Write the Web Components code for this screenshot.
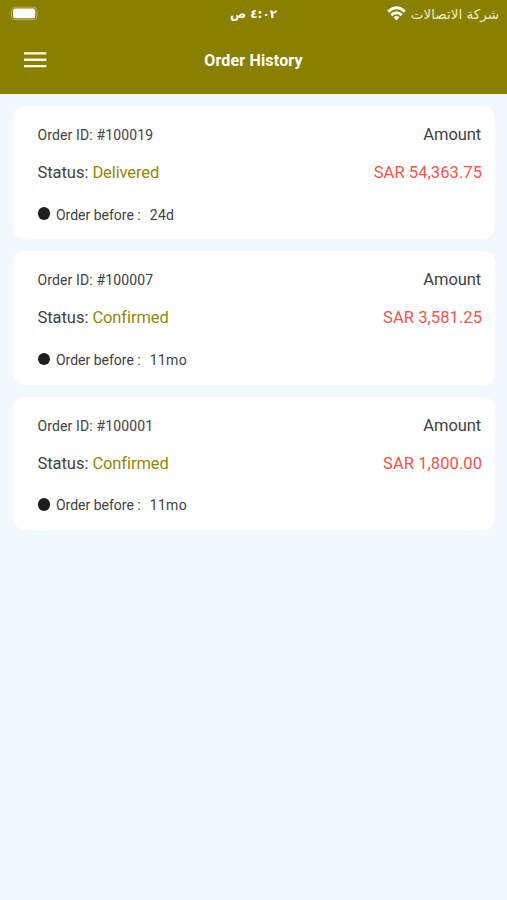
<!DOCTYPE html>
<html lang="en">
<head>
<meta charset="utf-8">
<title>Order History</title>
<style>
  html, body { margin: 0; height: 100%; }
  body { background: #f3f7fe; font-family: Roboto, "Noto Sans", sans-serif; color: #414143; overflow: hidden; }
</style>
</head>
<body>
<order-app>
  <status-bar slot="top"></status-bar>
  <app-bar slot="top">Order History</app-bar>
  <order-card order-id="#100019" status="Delivered" total="SAR 54,363.75" age="24d"></order-card>
  <order-card order-id="#100007" status="Confirmed" total="SAR 3,581.25" age="11mo"></order-card>
  <order-card order-id="#100001" status="Confirmed" total="SAR 1,800.00" age="11mo"></order-card>
</order-app>
<script>
class OrderApp extends HTMLElement {
  constructor() {
    super();
    this.attachShadow({ mode: "open" }).innerHTML = `
      <style>
        :host { display: flex; flex-direction: column; height: 100vh; }
        header { flex: none; height: 93.6px; background: #8a8000; color: #fff; }
        main { display: flex; flex-direction: column; gap: 12px; padding: 12.4px 12px 0 13px; }
      </style>
      <header><slot name="top"></slot></header>
      <main><slot></slot></main>`;
  }
}
class StatusBar extends HTMLElement {
  constructor() {
    super();
    this.attachShadow({ mode: "open" }).innerHTML = `
      <style>
        :host { display: grid; grid-template-columns: 1fr auto 1fr; align-items: center; height: 27px; padding: 0 8px; font: 13.5px/26px "DejaVu Sans", sans-serif; }
        .carrier { display: flex; justify-content: flex-end; align-items: center; gap: 5px; color: #efecc8; }
        .time { font-weight: bold; font-size: 12px; line-height: 26px; }
        svg { display: block; }
        .battery { margin-top: -1px; }
      </style>
      <svg class="battery" width="31" height="15" viewBox="0 0 31 15"><rect x="3.5" y="1.1" width="25.5" height="12.6" rx="3.6" fill="none" stroke="#b5ae5a"/><rect x="5" y="2.6" width="22.3" height="9.6" rx="2.2" fill="#fff"/><path d="M1.6 5.5Q.2 7.3 1.6 9.1z" fill="#b5ae5a"/></svg>
      <span class="time" dir="rtl">٤:٠٢ ص</span>
      <span class="carrier"><svg width="19" height="15" viewBox="0 0 19 15" fill="none" stroke="#fff" stroke-width="2.8"><path d="M1.2 5.6Q9.5-2 17.8 5.6M4.2 9.1Q9.5 4.3 14.8 9.1"/><path d="M6.5 11.2Q9.5 8.7 12.5 11.2L9.5 14.4z" fill="#fff" stroke="none"/></svg><span dir="rtl">شركة الاتصالات</span></span>`;
  }
}
class AppBar extends HTMLElement {
  constructor() {
    super();
    this.attachShadow({ mode: "open" }).innerHTML = `
      <style>
        :host { display: grid; grid-template-columns: 1fr auto 1fr; align-items: center; height: 66px; padding: 0 24px; font-weight: 700; font-size: 16px; letter-spacing: .17px; }
        svg { display: block; }
      </style>
      <svg width="23" height="16" viewBox="0 0 23 16" fill="#fffde8"><path d="M0 .3h22.3v2.3H0zM0 6.6h22.3v2.3H0zM0 12.9h22.3v2.3H0z"/></svg>
      <span><slot></slot></span><i></i>`;
  }
}
class OrderCard extends HTMLElement {
  connectedCallback() {
    const a = n => this.getAttribute(n);
    this.attachShadow({ mode: "open" }).innerHTML = `
      <style>
        :host { display: block; box-sizing: border-box; height: 133.4px; padding: 15.6px 13px 0 24.5px; background: #fff; border-radius: 12px; }
        .row { display: flex; justify-content: space-between; align-items: center; height: 26px; font-size: 16.5px; white-space: pre; }
        .row + .row { margin-top: 12px; }
        .id { font-size: 14px; letter-spacing: .13px; padding-top: 1px; }
        .amount { letter-spacing: -.1px; padding-right: 1px; }
        .label { letter-spacing: -.05px; }
        .status { color: #8f8a0a; letter-spacing: -.1px; font-variant-ligatures: none; }
        .total { color: #f4554b; letter-spacing: .07px; }
        .row.when { justify-content: flex-start; font-size: 14px; margin-top: 16px; }
        .dot { width: 12.4px; height: 12.4px; border-radius: 50%; background: #1e1e1f; margin: -2px 6px 0 0; }
        .age { margin-left: 9px; letter-spacing: .3px; }
      </style>
      <div class="row"><span class="id">Order ID: ${a("order-id")}</span><span class="amount">Amount</span></div>
      <div class="row"><span><span class="label">Status: </span><span class="status">${a("status")}</span></span><span class="total">${a("total")}</span></div>
      <div class="row when"><span class="dot"></span><span>Order before :</span><span class="age">${a("age")}</span></div>`;
  }
}
customElements.define("order-app", OrderApp);
customElements.define("status-bar", StatusBar);
customElements.define("app-bar", AppBar);
customElements.define("order-card", OrderCard);
</script>
</body>
</html>
